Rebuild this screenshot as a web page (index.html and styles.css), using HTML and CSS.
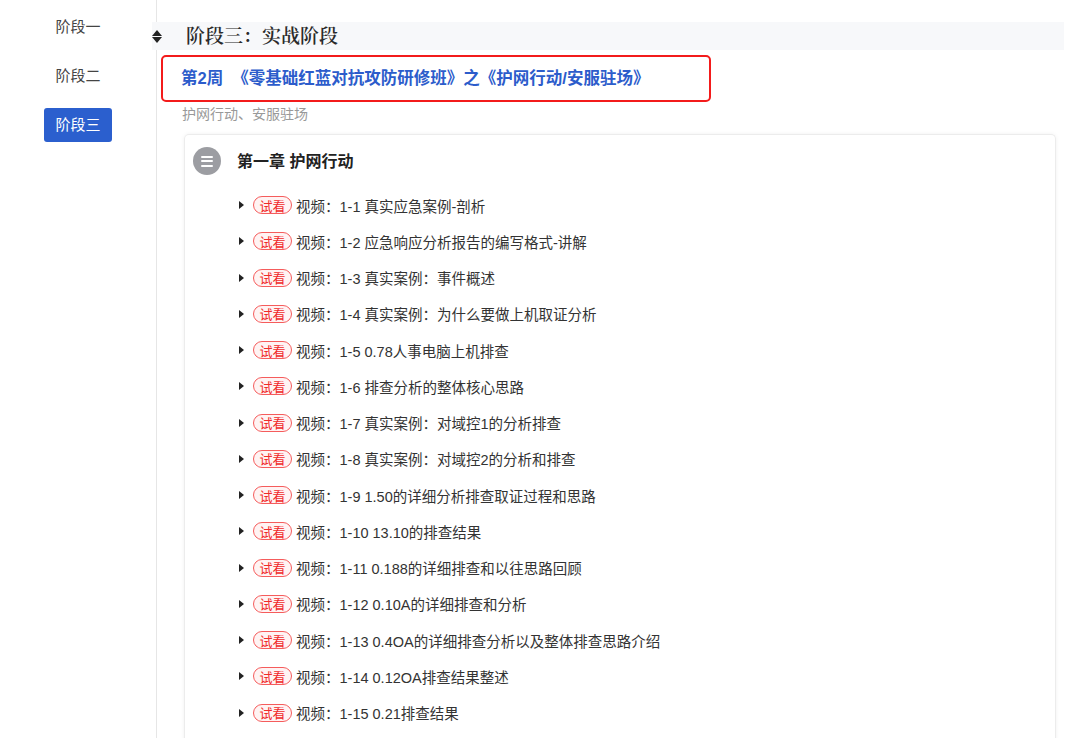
FILE: index.html
```html
<!DOCTYPE html>
<html lang="zh-CN">
<head>
  <meta charset="UTF-8" />
  <meta name="viewport" content="width=device-width, initial-scale=1.0"/>
  <title>课程目录</title>
  <link rel="stylesheet" href="styles.css">
</head>
<body>

  <div class="page">
    <div class="sidebar">
      <div class="stage">阶段一</div>
      <div class="stage">阶段二</div>
      <div class="stage active">阶段三</div>
    </div>

    <div class="main">
      <div class="stage-head">
        <span class="sort"><i class="up"></i><i class="down"></i></span>
        <span class="stage-title">阶段三：实战阶段</span>
      </div>

      <div class="week">第2周&nbsp;&nbsp;《零基础红蓝对抗攻防研修班》之《护网行动/安服驻场》</div>
      <div class="week-desc">护网行动、安服驻场</div>

      <div class="card">
        <div class="chapter">
          <span class="chapter-icon"><i></i><i></i><i></i></span>
          <span class="chapter-title">第一章 护网行动</span>
        </div>
        <ul class="lessons" id="lessons"></ul>
      </div>
    </div>
  </div>

  <script>
    const lessons = [
      '1-1 真实应急案例-剖析',
      '1-2 应急响应分析报告的编写格式-讲解',
      '1-3 真实案例：事件概述',
      '1-4 真实案例：为什么要做上机取证分析',
      '1-5 0.78人事电脑上机排查',
      '1-6 排查分析的整体核心思路',
      '1-7 真实案例：对域控1的分析排查',
      '1-8 真实案例：对域控2的分析和排查',
      '1-9 1.50的详细分析排查取证过程和思路',
      '1-10 13.10的排查结果',
      '1-11 0.188的详细排查和以往思路回顾',
      '1-12 0.10A的详细排查和分析',
      '1-13 0.4OA的详细排查分析以及整体排查思路介绍',
      '1-14 0.12OA排查结果整述',
      '1-15 0.21排查结果'
    ];

    const list = document.getElementById('lessons');
    lessons.forEach(name => {
      list.innerHTML += `<li><i class="caret"></i><span class="try">试看</span><span>视频：${name}</span></li>`;
    });
  </script>

</body>
</html>
```

FILE: styles.css
```css
* {
  box-sizing: border-box;
}

html, body {
  margin: 0;
  padding: 0;
  background: #fff;
  font-family: 'Liberation Sans', 'Noto Sans CJK SC', sans-serif;
  color: #333;
  overflow: hidden;
}

.page {
  display: flex;
  min-height: 100vh;
}

.sidebar {
  width: 157px;
  flex-shrink: 0;
  border-right: 1px solid #e6e6e6;
  display: flex;
  flex-direction: column;
  align-items: center;
  gap: 15px;
  padding-top: 10px;
}

.stage {
  height: 34px;
  line-height: 34px;
  padding: 0 11px;
  font-size: 15px;
  color: #444;
  border-radius: 3px;
}

.stage.active {
  background: #2b5fce;
  color: #fff;
}

.main {
  flex: 1;
  padding: 22px 16px 0 0;
}

.stage-head {
  margin-left: -5px;
  height: 28px;
  background: #f7f8fa;
  display: flex;
  align-items: center;
}

.sort {
  width: 10px;
  margin-left: 0;
  display: flex;
  flex-direction: column;
  gap: 1px;
}

.sort i {
  width: 0;
  height: 0;
  border-left: 5px solid transparent;
  border-right: 5px solid transparent;
}

.sort .up {
  border-bottom: 6px solid #222;
}

.sort .down {
  border-top: 6px solid #222;
}

.stage-title {
  margin-left: 24px;
  font-family: 'Noto Serif CJK SC', 'Liberation Serif', 'Noto Sans CJK SC', serif;
  font-size: 19px;
  line-height: 24px;
  font-weight: 600;
  color: #2a2a2a;
  margin-top: -3px;
}

.week {
  margin: 5px 0 0 4px;
  width: 550px;
  height: 47px;
  border: 2.5px solid #f31b1b;
  border-radius: 5px;
  padding: 0 0 3px 18px;
  display: flex;
  align-items: center;
  font-size: 16.5px;
  font-weight: bold;
  color: #2c5ccb;
}

.week-desc {
  margin: 2px 0 0 25px;
  line-height: 20px;
  font-size: 14px;
  color: #999;
}

.card {
  margin: 10px 8px 0 27px;
  border: 1px solid #ececec;
  border-bottom: none;
  border-radius: 5px 5px 0 0;
  box-shadow: 0 0 4px rgba(0, 0, 0, 0.06);
  padding: 12px 0 0 8px;
  min-height: 620px;
}

.chapter {
  display: flex;
  align-items: center;
  height: 28px;
}

.chapter-icon {
  width: 28px;
  height: 28px;
  border-radius: 50%;
  background: #9c9da2;
  display: flex;
  flex-direction: column;
  justify-content: center;
  align-items: center;
  gap: 2.5px;
}

.chapter-icon i {
  width: 12px;
  height: 2px;
  border-radius: 1px;
  background: #fff;
}

.chapter-title {
  margin-left: 16px;
  font-size: 16px;
  font-weight: bold;
  color: #222;
  margin-top: -2px;
}

.lessons {
  list-style: none;
  margin: 12px 0 0;
  padding: 0 0 0 46px;
}

.lessons li {
  height: 36.25px;
  display: flex;
  align-items: center;
  font-size: 14.5px;
  color: #333;
}

.caret {
  width: 0;
  height: 0;
  border-top: 4px solid transparent;
  border-bottom: 4px solid transparent;
  border-left: 5px solid #222;
  margin-right: 9px;
}

.try {
  width: 39px;
  height: 18px;
  border: 1px solid #f55c5c;
  border-radius: 9px;
  background: #fff3f3;
  color: #f02a2a;
  font-size: 13px;
  display: flex;
  align-items: center;
  justify-content: center;
  margin-right: 4px;
}
```
